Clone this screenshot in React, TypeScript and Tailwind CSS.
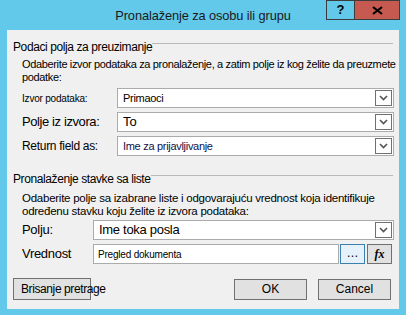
import React from "react";

const font = { fontFamily: '"Liberation Sans", Arial, sans-serif' };

function Chevron() {
  return (
    <div className="w-[17px] h-[16px] border border-[#707070] bg-white flex items-center justify-center mr-[1px]">
      <svg width="9" height="6" viewBox="0 0 9 6">
        <path d="M1 1 L4.5 4.5 L8 1" fill="none" stroke="#555" strokeWidth="1.6" />
      </svg>
    </div>
  );
}

function Combo({ value, textClass, width }: { value: string; textClass: string; width: string }) {
  return (
    <div className={`${width} h-[20px] bg-white border border-[#ababab] flex items-center justify-between pl-[5px]`}>
      <span className={textClass}>{value}</span>
      <Chevron />
    </div>
  );
}

function Legend({ text }: { text: string }) {
  return (
    <div className="flex items-start h-[16px]">
      <span className="text-[12px] leading-[16px] tracking-[-0.4px] text-black whitespace-nowrap">{text}</span>
      <div className="flex-1 border-t border-[#b9b9b9] mt-[4px] mr-[5px]" />
    </div>
  );
}

export default function App() {
  return (
    <div className="w-[406px] h-[315px] bg-[#63c9ea] flex flex-col" style={font}>
      <div className="relative h-[30px] flex items-center justify-center">
        <span className="text-[12.8px] text-[#1a1a1a] mt-[2px] tracking-[-0.1px]">Pronalaženje za osobu ili grupu</span>
        <div className="absolute right-[6px] top-0 flex">
          <div className="w-[28px] h-[20px] border border-[#3c3c3c] border-r-0 flex items-center justify-center text-[13px] font-bold text-black">?</div>
          <div className="w-[46px] h-[20px] bg-[#c75a50] border border-[#3c3c3c] flex items-center justify-center">
            <svg width="11" height="9" viewBox="0 0 11 9">
              <path d="M1 1 L10 8 M10 1 L1 8" stroke="#000" strokeWidth="2.2" />
            </svg>
          </div>
        </div>
      </div>
      <div className="mx-[7px] h-[279px] bg-[#f0f0f0] flex flex-col pl-[6px] pr-[1px]">
        <div className="mt-[9px]">
          <Legend text="Podaci polja za preuzimanje" />
        </div>
        <div className="pl-[9px] mt-[3px] text-[11px] leading-[13px] tracking-[-0.35px] text-black">
          Odaberite izvor podataka za pronalaženje, a zatim polje iz kog želite da preuzmete
          <br />
          podatke:
        </div>
        <div className="pl-[9px] mt-[4px] flex flex-col gap-[4px]">
          <div className="flex items-center">
            <span className="w-[95px] text-[10px] tracking-[-0.2px] text-black">Izvor podataka:</span>
            <Combo width="w-[277px]" value="Primaoci" textClass="text-[11px] tracking-[-0.3px] text-black" />
          </div>
          <div className="flex items-center">
            <span className="w-[95px] text-[13px] tracking-[-0.4px] text-black">Polje iz izvora:</span>
            <Combo width="w-[277px]" value="To" textClass="text-[13px] text-black" />
          </div>
          <div className="flex items-center">
            <span className="w-[95px] text-[12px] tracking-[-0.3px] text-black">Return field as:</span>
            <Combo width="w-[277px]" value="Ime za prijavljivanje" textClass="text-[11px] tracking-[-0.3px] text-[#10104a]" />
          </div>
        </div>
        <div className="mt-[15px]">
          <Legend text="Pronalaženje stavke sa liste" />
        </div>
        <div className="pl-[9px] mt-[5px] text-[11.5px] leading-[13px] tracking-[-0.25px] text-black">
          Odaberite polje sa izabrane liste i odgovarajuću vrednost koja identifikuje
          <br />
          određenu stavku koju želite iz izvora podataka:
        </div>
        <div className="pl-[9px] mt-[2px] flex flex-col gap-[4px]">
          <div className="flex items-center">
            <span className="w-[71px] text-[13px] tracking-[-0.3px] text-black">Polju:</span>
            <Combo width="w-[301px]" value="Ime toka posla" textClass="text-[13px] tracking-[-0.3px] text-black" />
          </div>
          <div className="flex items-center">
            <span className="w-[71px] text-[13px] tracking-[-0.3px] text-black">Vrednost</span>
            <div className="w-[246px] h-[20px] bg-white border border-[#ababab] flex items-center pl-[4px]">
              <span className="text-[10px] tracking-[-0.2px] text-black">Pregled dokumenta</span>
            </div>
            <div className="ml-[1px] w-[25px] h-[20px] border border-[#3c7fb1] bg-[#e5f1fb] flex items-center justify-center text-[12px] text-black pb-[2px]">…</div>
            <div className="ml-[2px] w-[25px] h-[20px] border border-[#707070] bg-[#e1e1e1] flex items-center justify-center">
              <span className="text-[12px] italic font-bold text-black" style={{ fontFamily: '"Liberation Serif", serif' }}>fx</span>
            </div>
          </div>
        </div>
        <div className="mt-[14px] flex items-center">
          <div className="w-[78px] h-[22px] border border-[#707070] bg-[#e1e1e1] flex items-center pl-[7px] text-[12px] tracking-[-0.4px] text-black whitespace-nowrap overflow-visible">
            Brisanje pretrage
          </div>
          <div className="ml-[143px] w-[73px] h-[21px] border border-[#707070] bg-[#e1e1e1] flex items-center justify-center text-[12px] text-black">OK</div>
          <div className="ml-[11px] w-[73px] h-[21px] border border-[#707070] bg-[#e1e1e1] flex items-center justify-center text-[12px] text-black">Cancel</div>
        </div>
      </div>
    </div>
  );
}
